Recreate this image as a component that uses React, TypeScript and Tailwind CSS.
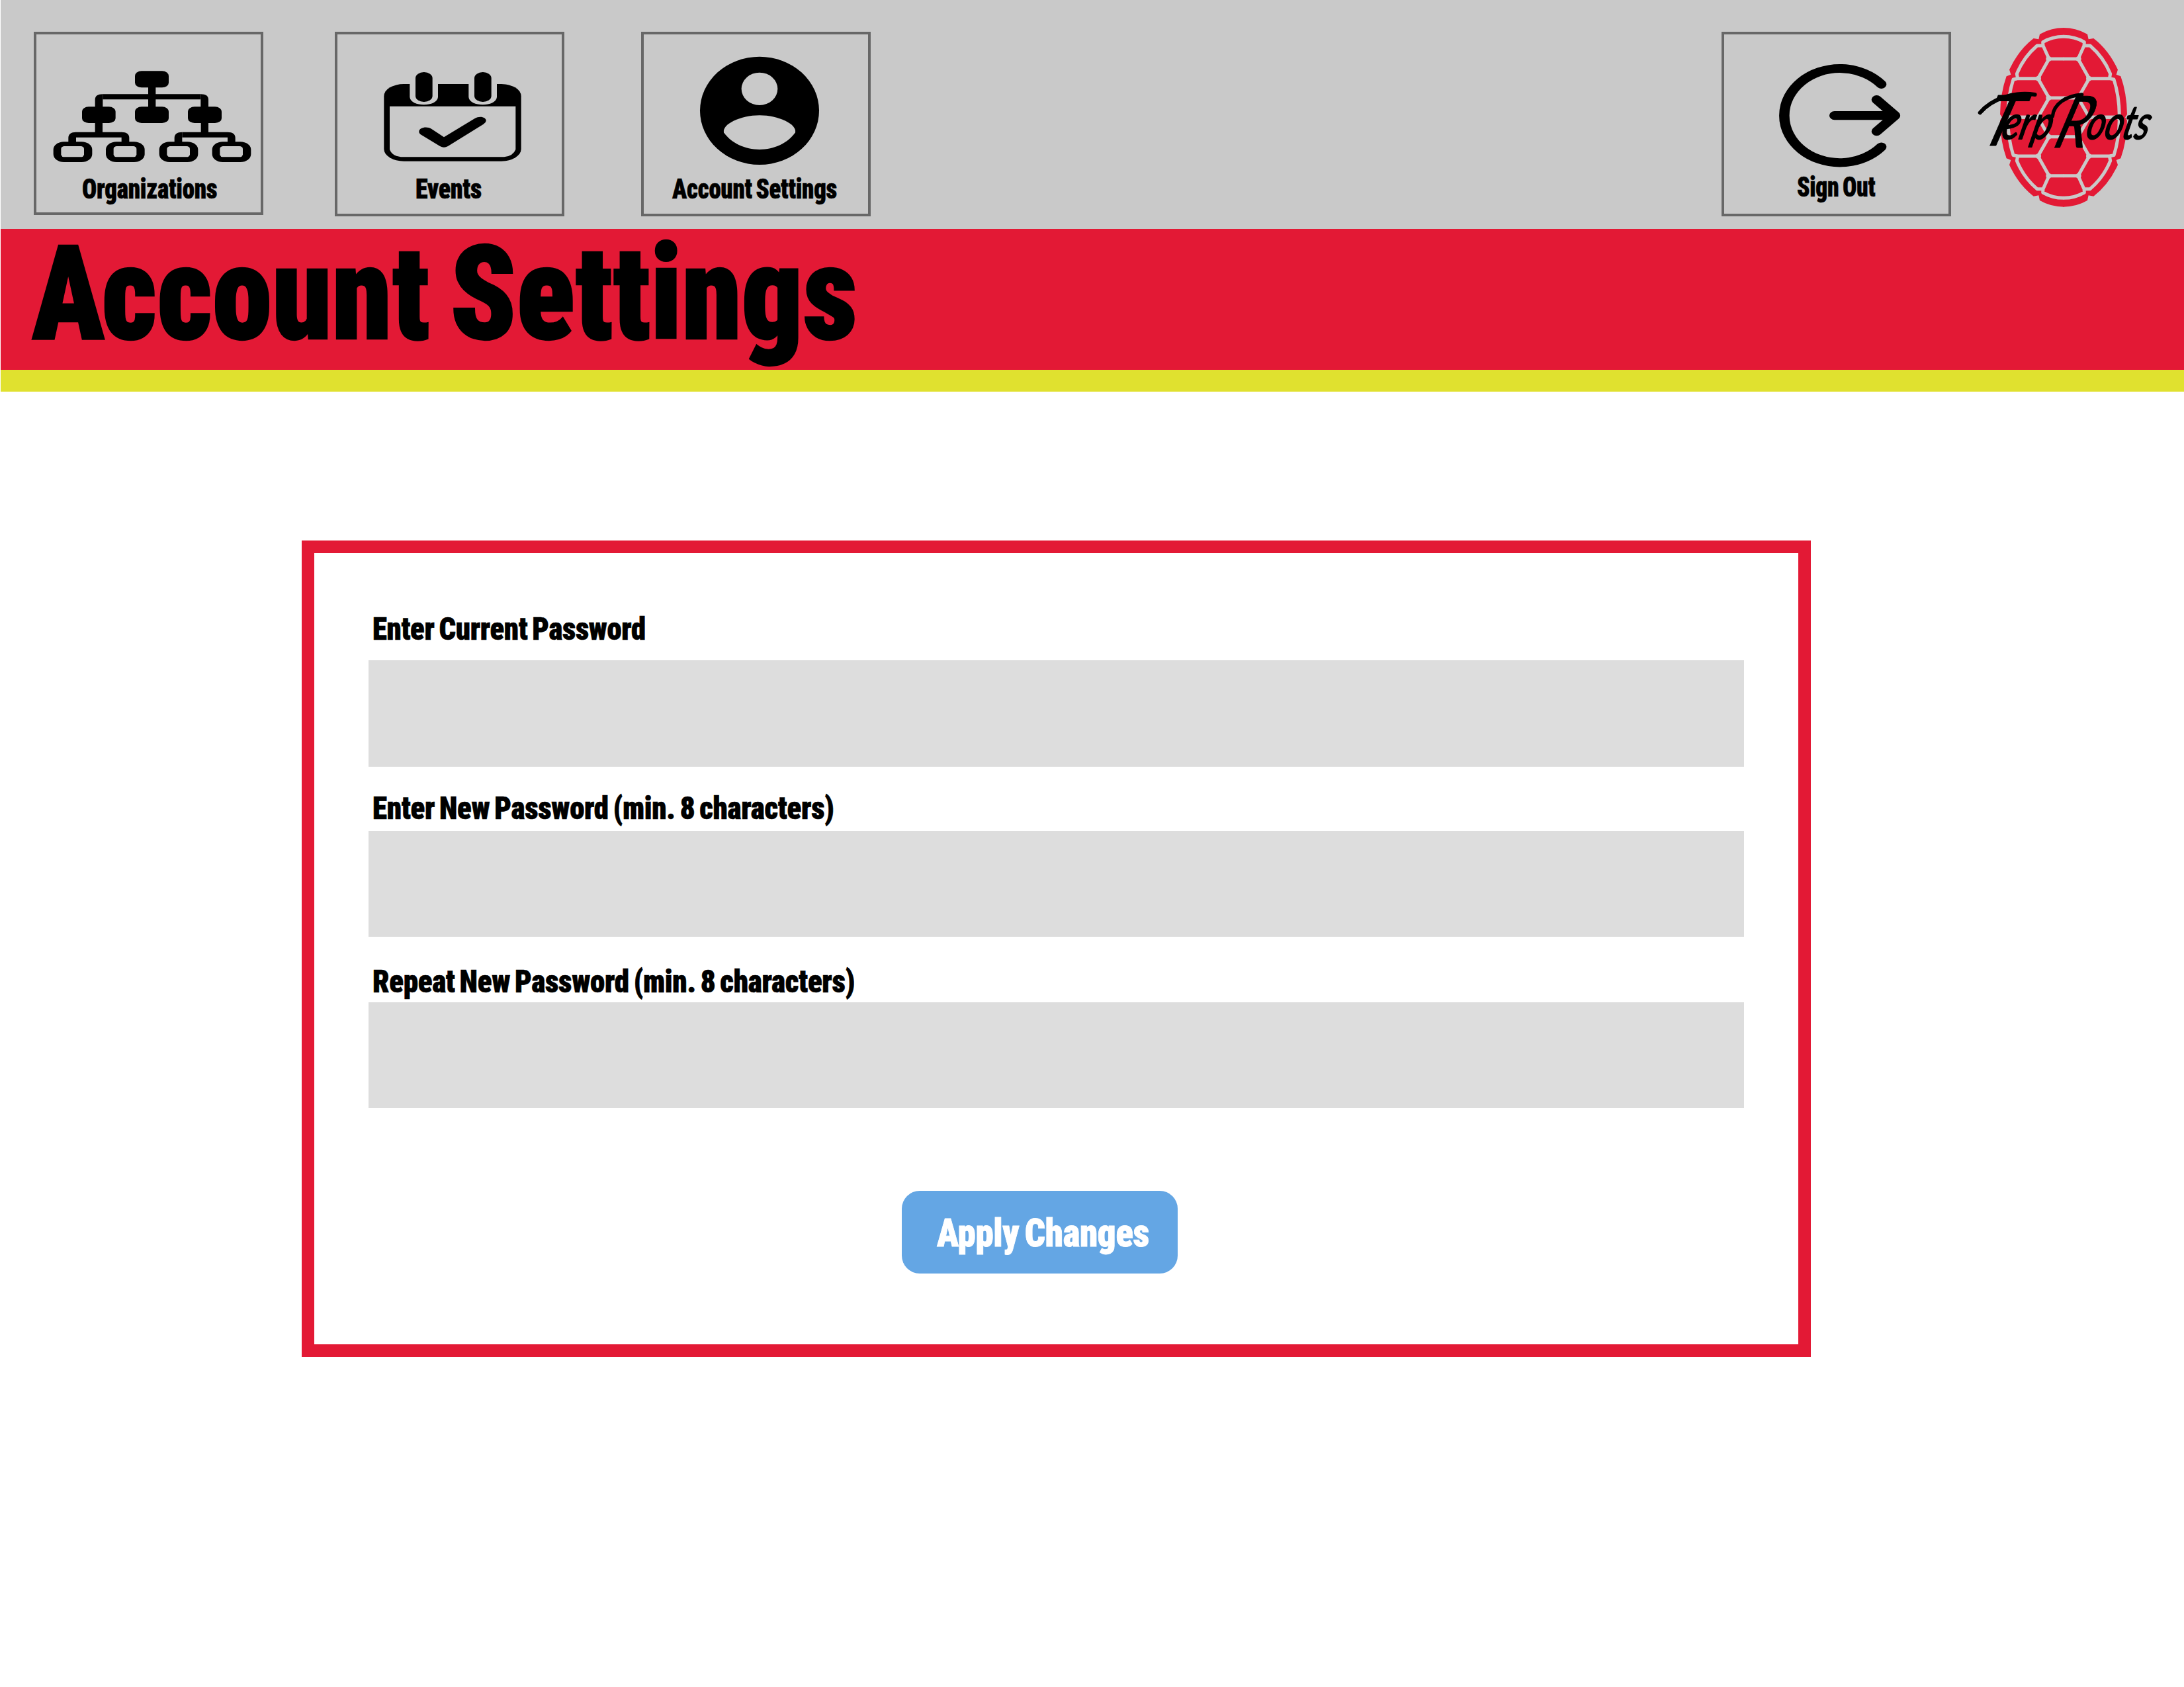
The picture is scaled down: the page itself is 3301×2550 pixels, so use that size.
import { useLayoutEffect, useRef, useState } from 'react';
import type { ReactNode } from 'react';

/** Heavy condensed text, stretched horizontally to fill the width of its box. */
function FitText({
  children,
  className,
  textClass = 'tracking-[-0.006em] [-webkit-text-stroke:0.015em_currentColor] [word-spacing:-0.07em]',
}: {
  children: string;
  className: string;
  textClass?: string;
}) {
  const box = useRef<HTMLSpanElement>(null);
  const text = useRef<HTMLSpanElement>(null);
  const [scale, setScale] = useState(1);
  useLayoutEffect(() => {
    if (box.current && text.current) {
      setScale(box.current.offsetWidth / text.current.offsetWidth);
    }
  }, []);
  return (
    <span ref={box} className={`block shrink-0 font-['Roboto','Liberation_Sans',sans-serif] font-black [font-stretch:75%] ${className}`}>
      <span
        ref={text}
        className={`inline-block origin-left whitespace-nowrap align-top ${textClass}`}
        style={{ transform: `scaleX(${scale})` }}
      >
        {children}
      </span>
    </span>
  );
}

function NavTile({ className, children }: { className: string; children: ReactNode }) {
  return (
    <a className={`flex w-[347px] shrink-0 flex-col items-start border-4 border-[#676767] ${className}`}>
      {children}
    </a>
  );
}

function OrgChartIcon() {
  return (
    <svg viewBox="45 66 1017 639" className="h-[213px] w-[339px] shrink-0">
      <g fill="none" stroke="#000">
        <path strokeWidth="34" d="M569 300V400M328 465V520M808 465V520" />
        <path strokeWidth="24" d="M346 349H790M224 521H432M706 521H912" />
      </g>
      <g>
        <path d="M311 400V362Q311 337 346 337V361V400ZM825 400V362Q825 337 790 337V361V400Z" />
        <path d="M190 560V535Q190 509 225 509V560ZM466 560V535Q466 509 431 509V560ZM671 560V535Q671 509 706 509V560ZM947 560V535Q947 509 912 509V560Z" />
        <rect x="492" y="232" width="153" height="75" rx="30" ry="22" />
        <rect x="252" y="394" width="152" height="74" rx="30" ry="22" />
        <rect x="492" y="394" width="153" height="74" rx="30" ry="22" />
        <rect x="732" y="394" width="153" height="74" rx="30" ry="22" />
      </g>
      {[122, 360, 602, 842].map((x) => (
        <g key={x}>
          <rect x={x} y="553" width="176" height="92" rx="48" ry="36" />
          <rect x={x + 35} y="573" width="104" height="49" rx="15" ry="12" fill="#c9c9c9" />
        </g>
      ))}
    </svg>
  );
}

function CalendarIcon() {
  return (
    <svg viewBox="60 66 1017 639" className="h-[213px] w-[339px] shrink-0">
      <rect x="271" y="291" width="622" height="350" rx="90" ry="55" />
      <path fill="#c9c9c9" d="M297 392H868V588Q855 622 805 622H360Q310 622 297 588Z" />
      <path fill="#c9c9c9" d="M388 285V350C392 396 512 396 516 350V285ZM655 285V350C659 396 779 396 783 350V285Z" />
      <rect x="414" y="237" width="77" height="135" rx="38" ry="27" />
      <rect x="681" y="237" width="77" height="135" rx="38" ry="27" />
      <path d="M430 507C430 488 466 482 486 494L543 532L683 447C705 434 735 441 734 458Q733 466 722 473L561 573Q543 584 525 573L441 522Q430 516 430 507Z" />
    </svg>
  );
}

function AccountIcon() {
  return (
    <svg viewBox="69 66 1017 639" className="h-[213px] w-[339px] shrink-0">
      <ellipse cx="594" cy="412" rx="270" ry="245" />
      <ellipse cx="594" cy="313" rx="82" ry="74" fill="#c9c9c9" />
      <path fill="#c9c9c9" d="M432 511C424 473 508 433 594 433S764 473 756 511C721 560 660 588 594 588S467 560 432 511Z" />
    </svg>
  );
}

function SignOutIcon() {
  return (
    <svg viewBox="48 66 1017 630" className="h-[210px] w-[339px] shrink-0">
      <g transform="translate(573 434) scale(1.18 1)" fill="none" stroke="#000" strokeWidth="39.5" strokeLinecap="round" strokeLinejoin="round">
        <path d="M159 -142A213.5 213.5 0 1 0 159 142" />
        <path d="M-21 0H211M141 -72L212 0L141 72" />
      </g>
    </svg>
  );
}

const quarters = [
  'translate(477 472)',
  'translate(477 472) scale(-1 1)',
  'translate(477 472) scale(1 -1)',
  'translate(477 472) scale(-1 -1)',
];

function TerpRootsLogo() {
  return (
    <svg viewBox="0 0 990 930" className="ml-[11px] mt-5 h-[310px] w-[330px] shrink-0 overflow-visible" aria-label="TerpRoots">
      {quarters.map((t) => (
        <path
          key={t}
          transform={t}
          fill="#e31935"
          d="M-2 -406Q58 -406 108 -377L113 -354L136 -358Q204 -306 246 -216L239 -194L259 -186Q286 -112 288 -14L278 2H-2Z"
        />
      ))}
      {quarters.map((t) => (
        <g key={t} transform={t} fill="none" stroke="#c9c9c9" strokeWidth="15" strokeLinejoin="round">
          <path d="M-1 -366Q52 -366 94 -341L93 -325L66 -265H-1M93 -325L120 -325Q182 -272 212 -197L208 -176H116L66 -265M208 -176L228 -172Q252 -98 253 -8L244 0H116L66 -88H-1M66 -88L116 -176" />
          <g fill="#c9c9c9" stroke="none">
            <circle cx="68" cy="-265" r="12" />
            <circle cx="114" cy="-176" r="12" />
            <circle cx="68" cy="-88" r="12" />
            <circle cx="114" cy="0" r="12" />
          </g>
        </g>
      ))}
      <g fill="none" stroke="#000" strokeLinecap="round">
        <path strokeWidth="18" d="M98 451C150 390 250 354 347 369" />
        <path strokeWidth="16" d="M427 467C432 410 490 374 560 369" />
      </g>
      <g className="font-['Lato','Liberation_Sans',sans-serif] italic" stroke="#000" strokeLinejoin="round">
        <text transform="translate(88 600) skewX(-18)" fontSize="318" strokeWidth="3" textLength="160" lengthAdjust="spacingAndGlyphs">T</text>
        <text transform="translate(188 569) skewX(-14)" fontSize="212" strokeWidth="6" textLength="226" lengthAdjust="spacingAndGlyphs">erp</text>
        <text transform="translate(424 608) skewX(-18)" fontSize="326" strokeWidth="3" textLength="150" lengthAdjust="spacingAndGlyphs">R</text>
        <text transform="translate(572 569) skewX(-14)" fontSize="212" strokeWidth="6" textLength="284" lengthAdjust="spacingAndGlyphs">oots</text>
      </g>
    </svg>
  );
}

function Field({ label, labelClass, inputClass }: { label: string; labelClass: string; inputClass: string }) {
  return (
    <label className="flex flex-col">
      <FitText className={`ml-[6px] h-12 text-[48px] leading-[48px] ${labelClass}`}>{label}</FitText>
      <input type="password" className={`block w-[2079px] bg-[#dddddd] outline-none ${inputClass}`} />
    </label>
  );
}

export default function App() {
  return (
    <div className="flex h-[2550px] w-[3301px] flex-col overflow-hidden bg-white pl-px text-black">
      <header className="flex h-[346px] shrink-0 items-start bg-[#c9c9c9]">
        <nav className="flex pt-12 pl-[50px]">
          <NavTile className="h-[277px]">
            <OrgChartIcon />
            <FitText className="ml-[69px] w-[204px] text-[42px] leading-[42px]">Organizations</FitText>
          </NavTile>
          <NavTile className="ml-[108px] h-[279px]">
            <CalendarIcon />
            <FitText className="ml-[118px] w-[100px] text-[42px] leading-[42px]">Events</FitText>
          </NavTile>
          <NavTile className="ml-[116px] h-[279px]">
            <AccountIcon />
            <FitText className="ml-[43px] w-[249px] text-[42px] leading-[42px]">Account Settings</FitText>
          </NavTile>
        </nav>
        <div className="ml-auto flex items-start">
          <NavTile className="mt-12 h-[279px]">
            <SignOutIcon />
            <FitText className="ml-[110px] w-[118px] text-[42px] leading-[42px]">Sign Out</FitText>
          </NavTile>
          <TerpRootsLogo />
          <div className="w-[11px]" />
        </div>
      </header>

      <div className="h-[213px] shrink-0 bg-[#e31935]">
        <h1>
          <FitText
            className="ml-[47px] h-[196px] w-[1248px] text-[198px] leading-[196px]"
            textClass="[-webkit-text-stroke:0.012em_currentColor] [word-spacing:-0.06em] first-letter:tracking-[-0.025em]"
          >
            Account Settings
          </FitText>
        </h1>
      </div>
      <div className="h-[33px] shrink-0 bg-[#e0e12f]" />

      <main className="mt-[225px] ml-[455px] h-[1234px] w-[2281px] shrink-0 border-[19px] border-[#e31935]">
        <form className="flex flex-col pt-[91px] pl-[82px]">
          <Field label="Enter Current Password" labelClass="w-[413px]" inputClass="mt-[23px] h-[161px]" />
          <Field label="Enter New Password (min. 8 characters)" labelClass="mt-[39px] w-[698px]" inputClass="mt-[10px] h-[160px]" />
          <Field label="Repeat New Password (min. 8 characters)" labelClass="mt-[44px] w-[729px]" inputClass="mt-[7px] h-[160px]" />
          <button type="button" className="mt-[125px] ml-[806px] flex h-[125px] w-[417px] items-start rounded-[27px] bg-[#64a6e4] pt-[34px] pl-[53px] text-left text-white">
            <FitText className="w-[321px] text-[60px] leading-[60px]">Apply Changes</FitText>
          </button>
        </form>
      </main>
    </div>
  );
}
